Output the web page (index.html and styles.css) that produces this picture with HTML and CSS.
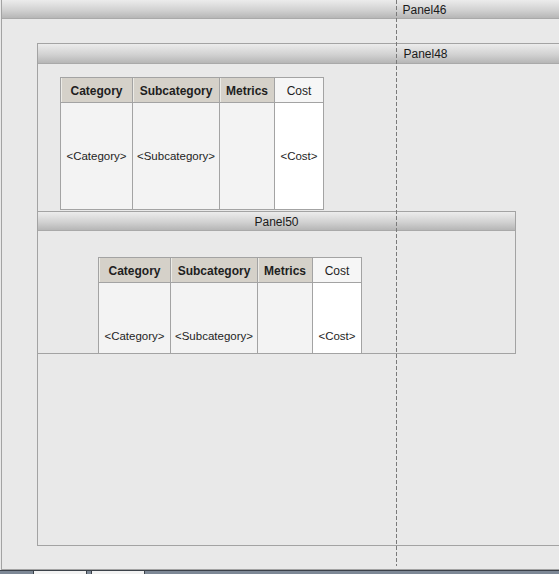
FILE: index.html
```html
<!DOCTYPE html>
<html lang="en">
<head>
    <meta charset="UTF-8">
    <meta name="viewport" content="width=device-width, initial-scale=1.0">
    <title>Layout Designer</title>
    <link rel="stylesheet" href="styles.css">
</head>
<body>
    <div class="canvas">
        <div class="panel panel46">
            <div class="panel-head">Panel46</div>
            <div class="panel-body">
                <div class="panel panel48">
                    <div class="panel-head">Panel48</div>
                    <div class="panel-body">
                        <table class="grid">
                            <tr>
                                <th class="col-cat">Category</th>
                                <th class="col-sub">Subcategory</th>
                                <th class="col-met">Metrics</th>
                                <th class="col-cost plain">Cost</th>
                            </tr>
                            <tr>
                                <td>&lt;Category&gt;</td>
                                <td>&lt;Subcategory&gt;</td>
                                <td></td>
                                <td class="white">&lt;Cost&gt;</td>
                            </tr>
                        </table>

                        <div class="panel panel50">
                            <div class="panel-head">Panel50</div>
                            <div class="panel-body">
                                <table class="grid">
                                    <tr>
                                        <th class="col-cat">Category</th>
                                        <th class="col-sub">Subcategory</th>
                                        <th class="col-met">Metrics</th>
                                        <th class="col-cost plain">Cost</th>
                                    </tr>
                                    <tr>
                                        <td>&lt;Category&gt;</td>
                                        <td>&lt;Subcategory&gt;</td>
                                        <td></td>
                                        <td class="white">&lt;Cost&gt;</td>
                                    </tr>
                                </table>
                            </div>
                        </div>
                    </div>
                </div>
            </div>
        </div>

        <!-- snap guide -->
        <div class="guide"></div>
    </div>

    <div class="taskbar">
        <span class="tab"></span>
        <span class="tab"></span>
    </div>
</body>
</html>
```

FILE: styles.css
```css
html, body {
    margin: 0;
    height: 100%;
    overflow: hidden;
}
body {
    font-family: "Liberation Sans", Arial, sans-serif;
    font-size: 12px;
    color: #1e1e1e;
    background: #e9e9e9;
}
.canvas {
    position: relative;
    height: 570px;
    overflow: hidden;
}
.panel {
    background: #e9e9e9;
    border: 1px solid #a3a3a3;
    box-sizing: border-box;
}
.panel-head {
    height: 19px;
    line-height: 19px;
    text-align: center;
    color: #1a1a1a;
    background: linear-gradient(to bottom, #ececec, #d2d2d2 55%, #b6b6b6);
    border-bottom: 1px solid #a9a9a9;
    box-sizing: border-box;
}
.panel46 {
    margin-left: 1px;
    width: 846px;
    height: 570px;
    border-top: none;
    border-right: none;
}
.panel46 > .panel-head {
    line-height: 20px;
}
.panel46 > .panel-body {
    padding: 24px 0 0 35px;
}
.panel48 {
    width: 776px;
    height: 503px;
    border-right: none;
}
.panel48 > .panel-head {
    height: 20px;
    line-height: 20px;
}
.panel48 > .panel-body {
    padding-top: 13px;
}
.panel48 > .panel-body > .grid {
    margin-left: 22px;
}
.panel50 {
    width: 479px;
    height: 143px;
    margin: 1px 0 0 -1px;
    overflow: hidden;
}
.panel50 > .panel-head {
    line-height: 20px;
}
.panel50 > .panel-body {
    padding: 26px 0 0 60px;
}
.grid {
    border-collapse: collapse;
    table-layout: fixed;
    border: 1px solid #a3a3a3;
}
.grid th, .grid td {
    border: 1px solid #a3a3a3;
    text-align: center;
    padding: 0;
    white-space: nowrap;
}
.grid th {
    height: 22px;
    padding-top: 2px;
    background: #d5d1c9;
    font-weight: bold;
    box-shadow: inset 1px 0 0 #ecebe6;
}
.grid th.plain {
    background: #f6f6f6;
    font-weight: normal;
    padding-top: 1px;
    height: 23px;
    box-shadow: none;
}
.grid td {
    height: 106px;
    background: #f3f3f3;
    font-size: 11.5px;
}
.grid td.white {
    background: #ffffff;
}
.col-cat { width: 71px; }
.col-sub { width: 86px; }
.col-met { width: 54px; }
.col-cost { width: 48px; }
.guide {
    position: absolute;
    left: 396px;
    top: 0;
    width: 1px;
    height: 566px;
    background: repeating-linear-gradient(to bottom, #7a7a7a 0 4px, transparent 4px 6px);
}
.taskbar {
    height: 3px;
    border-top: 1px solid #3b4149;
    background: #7d8896;
    display: flex;
    gap: 4px;
    padding-left: 33px;
}
.tab {
    width: 52px;
    height: 3px;
    background: #f2f2f2;
    border-left: 1px solid #3b4149;
    border-right: 1px solid #3b4149;
}
```
